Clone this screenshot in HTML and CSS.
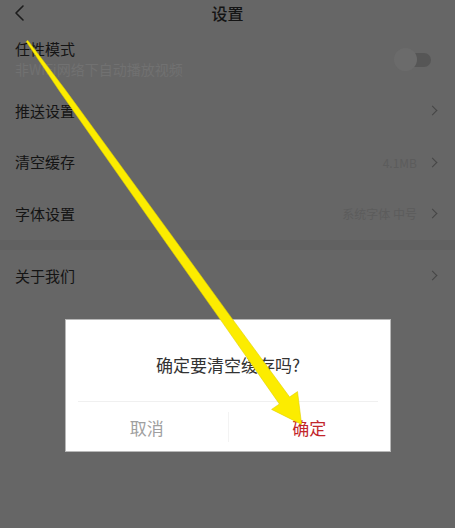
FILE: index.html
```html
<!DOCTYPE html>
<html lang="zh-CN">

<head>
    <meta charset="UTF-8">
    <meta name="viewport" content="width=device-width, initial-scale=1.0">
    <title>设置</title>
    <link rel="stylesheet" href="styles.css">
</head>

<body>
    <div class="page">
        <div class="header">
            <span class="back">
                <svg width="14" height="18" viewBox="0 0 14 18"><path d="M10 2 L3 9 L10 16" fill="none" stroke="#1c1c1c" stroke-width="1.6" stroke-linecap="round" stroke-linejoin="round"/></svg>
            </span>
            <h1>设置</h1>
        </div>

        <div class="row row-mode">
            <div class="row-text">
                <div class="label">任性模式</div>
                <div class="sub">非WiFi网络下自动播放视频</div>
            </div>
            <div class="toggle"><span class="knob"></span></div>
        </div>

        <div class="row">
            <div class="label">推送设置</div>
            <div class="right"><span class="chev"></span></div>
        </div>
        <div class="row">
            <div class="label">清空缓存</div>
            <div class="right"><span class="value">4.1MB</span><span class="chev"></span></div>
        </div>
        <div class="row">
            <div class="label">字体设置</div>
            <div class="right"><span class="value">系统字体 中号</span><span class="chev"></span></div>
        </div>

        <div class="band"></div>

        <div class="row">
            <div class="label">关于我们</div>
            <div class="right"><span class="chev"></span></div>
        </div>
    </div>

    <div class="dialog">
        <p class="dialog-msg">确定要清空缓存吗?</p>
        <div class="dialog-btns">
            <button class="btn btn-cancel">取消</button>
            <button class="btn btn-ok">确定</button>
        </div>
    </div>

    <svg class="arrow" width="455" height="528" viewBox="0 0 455 528">
        <polygon points="27.8,40.4 64.4,88.5 173.3,237.7 231.2,317.4 289.6,397 297.5,391.6 301.6,424.4 271.6,409.4 279.4,404 222.5,322.6 165.7,242.3 59.8,91.5 26.2,41.6"
            fill="#fcec00" stroke="#e0d000" stroke-width="0.6" stroke-linejoin="round"/>
    </svg>
</body>

</html>
```

FILE: styles.css
```css
* {
    margin: 0;
    padding: 0;
    box-sizing: border-box;
    font-family: "Noto Sans CJK SC", "Noto Sans", sans-serif;
}

body {
    background: #666666;
    width: 455px;
    height: 528px;
    overflow: hidden;
}

.page {
    width: 455px;
}

.header {
    height: 28px;
    display: flex;
    align-items: flex-start;
    justify-content: center;
    position: relative;
}

.header h1 {
    font-size: 16px;
    font-weight: 500;
    color: #141414;
    line-height: 26px;
}

.back {
    position: absolute;
    left: 13px;
    top: 4px;
    display: flex;
}

.row {
    height: 51.5px;
    display: flex;
    align-items: center;
    justify-content: space-between;
    padding: 0 15px;
}

.row-mode {
    height: 57px;
    padding-top: 11px;
    padding-bottom: 7px;
    padding-right: 24px;
    align-items: flex-start;
}

.label {
    font-size: 15px;
    line-height: 20px;
    color: #141414;
}

.sub {
    font-size: 14px;
    line-height: 20px;
    color: #717171;
}

.toggle {
    width: 34px;
    height: 14px;
    margin-top: 14px;
    background: #565656;
    border-radius: 7px;
    position: relative;
}

.knob {
    position: absolute;
    left: -3px;
    top: -5px;
    width: 23px;
    height: 23px;
    border-radius: 50%;
    background: #6b6b6b;
}

.right {
    display: flex;
    align-items: center;
    gap: 12px;
}

.value {
    font-size: 12px;
    color: #5c5c5c;
}

.chev {
    width: 7px;
    height: 7px;
    border-top: 1.6px solid #454545;
    border-right: 1.6px solid #454545;
    transform: rotate(45deg);
    margin-right: 4px;
}

.band {
    height: 10.5px;
    background: #616161;
}

.dialog {
    position: fixed;
    left: 65px;
    top: 319px;
    width: 326px;
    height: 133px;
    background: #ffffff;
    border: 1px solid #b8b8b8;
    display: flex;
    flex-direction: column;
}

.dialog-msg {
    height: 82px;
    font-size: 17px;
    color: #333333;
    display: flex;
    align-items: center;
    justify-content: center;
    padding-top: 8px;
    margin: 0 12px;
    border-bottom: 1px solid #f0f0f0;
}

.dialog-btns {
    flex: 1;
    display: flex;
    align-items: center;
}

.btn {
    flex: 1;
    height: 30px;
    border: none;
    background: none;
    font-size: 17px;
    padding-top: 2px;
}

.btn-cancel {
    color: #a0a0a0;
    border-right: 1px solid #f3f3f3;
}

.btn-ok {
    color: #c2262b;
}

.arrow {
    position: absolute;
    left: 0;
    top: 0;
    pointer-events: none;
}
```
